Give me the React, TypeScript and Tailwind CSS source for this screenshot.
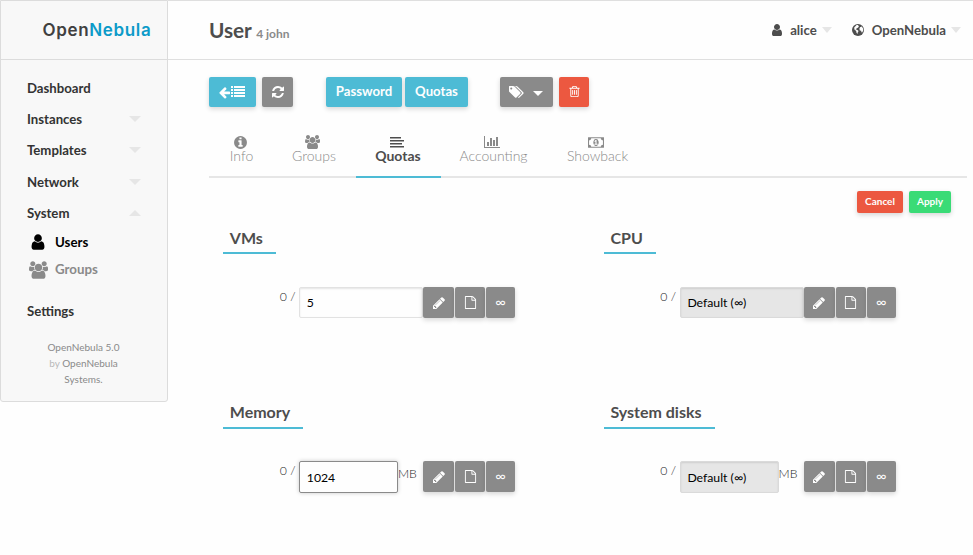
import React from "react";

type IconProps = { d: string; box?: string; className: string };

function Icon({ d, box = "0 0 1792 1792", className }: IconProps) {
  return (
    <svg viewBox={box} className={`block shrink-0 fill-current ${className}`} aria-hidden="true">
      <path d={d} />
    </svg>
  );
}

const USER =
  "M1536 1399q0 109-62.5 187t-150.5 78h-854q-88 0-150.5-78t-62.5-187q0-85 8.5-160.5t31.5-152 58.5-131 94-89 134.5-34.5q131 128 313 128t313-128q76 0 134.5 34.5t94 89 58.5 131 31.5 152 8.5 160.5zm-256-887q0 159-112.5 271.5t-271.5 112.5-271.5-112.5-112.5-271.5 112.5-271.5 271.5-112.5 271.5 112.5 112.5 271.5z";
const USERS =
  "M529 896q-162 5-265 128h-134q-82 0-138-40.5t-56-118.5q0-353 124-353 6 0 43.5 21t97.5 42.5 119 21.5q67 0 133-23-5 37-5 66 0 159 93 256zm1071 637q0 120-73 189.5t-194 69.5h-874q-121 0-194-69.5t-73-189.5q0-53 3.5-103.5t14-109 26.5-108.5 43-97.5 62-81 85.5-53.5 111.5-20q10 0 43 21.5t73 48 107 48 135 21.5 135-21.5 107-48 73-48 43-21.5q61 0 111.5 20t85.5 53.5 62 81 43 97.5 26.5 108.5 14 109 3.5 103.5zm-1024-1277q0 106-75 181t-181 75-181-75-75-181 75-181 181-75 181 75 75 181zm704 384q0 159-112.5 271.5t-271.5 112.5-271.5-112.5-112.5-271.5 112.5-271.5 271.5-112.5 271.5 112.5 112.5 271.5zm576 225q0 78-56 118.5t-138 40.5h-134q-103-123-265-128 93-97 93-256 0-29-5-66 66 23 133 23 59 0 119-21.5t97.5-42.5 43.5-21q124 0 124 353zm-128-609q0 106-75 181t-181 75-181-75-75-181 75-181 181-75 181 75 75 181z";
const USERS_BOX = "-64 0 1920 1792";
const ARROW_LEFT =
  "M1664 896v128q0 53-32.5 90.5t-84.5 37.5h-704l293 294q38 36 38 90t-38 90l-75 76q-37 37-90 37-52 0-91-37l-651-652q-37-37-37-90 0-52 37-91l651-650q38-38 91-38 52 0 90 38l75 74q38 38 38 91t-38 91l-293 293h704q52 0 84.5 37.5t32.5 90.5z";
const LIST =
  "M0 1280h256v256h-256zM384 1280h1408v256h-1408zM0 896h256v256h-256zM384 896h1408v256h-1408zM0 512h256v256h-256zM384 512h1408v256h-1408zM0 128h256v256h-256zM384 128h1408v256h-1408z";
const REFRESH =
  "M1639 1056q0 5-1 7-64 268-268 434.5t-478 166.5q-146 0-282.5-55t-243.5-157l-129 129q-19 19-45 19t-45-19-19-45v-448q0-26 19-45t45-19h448q26 0 45 19t19 45-19 45l-137 137q71 66 161 102t187 36q134 0 250-65t186-179q11-17 53-117 8-23 30-23h192q13 0 22.5 9.5t9.5 22.5zm25-800v448q0 26-19 45t-45 19h-448q-26 0-45-19t-19-45 19-45l138-138q-148-137-349-137-134 0-250 65t-186 179q-11 17-53 117-8 23-30 23h-199q-13 0-22.5-9.5t-9.5-22.5v-7q65-268 270-434.5t480-166.5q146 0 284 55.5t245 156.5l130-129q19-19 45-19t45 19 19 45z";
const TAGS =
  "M384 448q0-53-37.5-90.5t-90.5-37.5-90.5 37.5-37.5 90.5 37.5 90.5 90.5 37.5 90.5-37.5 37.5-90.5zm1067 576q0 53-37 90l-491 492q-39 37-91 37-53 0-90-37l-715-716q-38-37-64.5-101t-26.5-117v-416q0-52 38-90t90-38h416q53 0 117 26.5t102 64.5l715 714q37 39 37 91zm384 0q0 53-37 90l-491 492q-39 37-91 37-36 0-59-14t-53-45l470-470q37-37 37-90 0-52-37-91l-715-714q-38-38-102-64.5t-117-26.5h224q53 0 117 26.5t102 64.5l715 714q37 39 37 91z";
const TRASH =
  "M704 736v576q0 14-9 23t-23 9h-64q-14 0-23-9t-9-23v-576q0-14 9-23t23-9h64q14 0 23 9t9 23zm256 0v576q0 14-9 23t-23 9h-64q-14 0-23-9t-9-23v-576q0-14 9-23t23-9h64q14 0 23 9t9 23zm256 0v576q0 14-9 23t-23 9h-64q-14 0-23-9t-9-23v-576q0-14 9-23t23-9h64q14 0 23 9t9 23zm128 724v-948h-896v948q0 22 7 40.5t14.5 27 10.5 8.5h832q3 0 10.5-8.5t14.5-27 7-40.5zm-672-1076h448l-48-117q-7-9-17-11h-317q-10 2-17 11zm928 32v64q0 14-9 23t-23 9h-96v948q0 83-47 143.5t-113 60.5h-832q-66 0-113-58.5t-47-141.5v-952h-96q-14 0-23-9t-9-23v-64q0-14 9-23t23-9h309l70-167q15-37 54-63t79-26h320q40 0 79 26t54 63l70 167h309q14 0 23 9t9 23z";
const INFO =
  "M1152 1376v-160q0-14-9-23t-23-9h-96v-512q0-14-9-23t-23-9h-320q-14 0-23 9t-9 23v160q0 14 9 23t23 9h96v320h-96q-14 0-23 9t-9 23v160q0 14 9 23t23 9h448q14 0 23-9t9-23zm-128-896v-160q0-14-9-23t-23-9h-192q-14 0-23 9t-9 23v160q0 14 9 23t23 9h192q14 0 23-9t9-23zm640 416q0 209-103 385.5t-279.5 279.5-385.5 103-385.5-103-279.5-279.5-103-385.5 103-385.5 279.5-279.5 385.5-103 385.5 103 279.5 279.5 103 385.5z";
const PENCIL =
  "M491 1536l91-91-235-235-91 91v107h128v128h107zm523-928q0-22-22-22-10 0-17 7l-542 542q-7 7-7 17 0 22 22 22 10 0 17-7l542-542q7-7 7-17zm-54-192l416 416-832 832h-416v-416zm683 96q0 53-37 90l-166 166-416-416 166-165q36-38 90-38 53 0 91 38l235 234q37 39 37 91z";
const FILE =
  "M1596 380q28 28 48 76t20 88v1152q0 40-28 68t-68 28h-1344q-40 0-68-28t-28-68v-1600q0-40 28-68t68-28h896q40 0 88 20t76 48zm-444-244v376h376q-10-29-22-41l-313-313q-12-12-41-22zm384 1528v-1024h-416q-40 0-68-28t-28-68v-416h-768v1536h1280z";
const BARS =
  "M640 896v512h-256v-512h256zm384-512v1024h-256v-1024h256zm1024 1152v128h-2048v-1536h128v1408h1920zm-640-896v768h-256v-768h256zm384-384v1152h-256v-1152h256z";
const MONEY =
  "M768 1152h384v-96h-128v-448h-114l-148 137 77 80q42-37 55-57h2v288h-128v96zm512-256q0 70-21 142t-59.5 134-101.5 101-138 39-138-39-101.5-101-59.5-134-21-142 21-142 59.5-134 101.5-101 138-39 138 39 101.5 101 59.5 134 21 142zm512 256v-512q-106 0-181-75t-75-181h-1152q0 106-75 181t-181 75v512q106 0 181 75t75 181h1152q0-106 75-181t181-75zm128-832v1152q0 26-19 45t-45 19h-1792q-26 0-45-19t-19-45v-1152q0-26 19-45t45-19h1792q26 0 45 19t19 45z";
const ALIGN =
  "M0 128h1408v192h-1408zM0 512h1792v192h-1792zM0 896h1536v192h-1536zM0 1280h1792v192h-1792z";

function Globe() {
  return (
    <svg viewBox="0 0 12 12" className="block h-3 w-3" aria-hidden="true">
      <circle cx="6" cy="6" r="6" fill="#4d4d4d" />
      <path
        d="M4.6 1 L6.6 .9 L6 2.1 L7.2 2.6 L5.8 3.8 L4.6 4.4 L3.6 5.2 L5.4 5.9 L6.6 7 L5.8 8.3 L5.4 10 L4.4 8.6 L4.2 7 L2.4 5.6 L2.2 3.4 Z M8 3.2 L9.8 2.6 L11.2 4.8 L11.2 6.4 L10.2 8.6 L9.4 8.2 L9.2 6.8 L7.8 6.4 L7.4 4.8 Z"
        fill="#fefefe"
      />
    </svg>
  );
}

function Caret({ up = false, className = "w-3" }: { up?: boolean; className?: string }) {
  return (
    <svg viewBox="0 0 12 6" preserveAspectRatio="none" className={`block h-1.5 shrink-0 ${className}`} aria-hidden="true">
      <path d={up ? "M0 6 6 0l6 6z" : "M0 0h12L6 6z"} fill="#e6e6e6" />
    </svg>
  );
}

function NavItem({ label, height, caret }: { label: string; height: string; caret?: "up" | "down" }) {
  return (
    <div className={`flex items-center justify-between pr-[26px] pl-[26px] text-[13.2px] font-bold text-[#333] ${height}`}>
      <span className="pt-[2px]">{label}</span>
      {caret && <Caret up={caret === "up"} />}
    </div>
  );
}

function Sidebar() {
  return (
    <aside className="h-[402px] w-[168px] shrink-0 rounded-b-[3px] border border-[#dcdcdc] bg-[#f8f8f8]">
      <div className="flex h-[59px] items-center border-b border-[#dcdcdc] pl-[41.5px] font-['Inter'] text-[17px] font-semibold tracking-[0.65px]">
        <span className="text-[#404040]">Open</span>
        <span className="text-[#0c9bc9]">Nebula</span>
      </div>
      <nav className="pt-[12px]">
        <NavItem label="Dashboard" height="h-[31px]" />
        <NavItem label="Instances" height="h-[31px]" caret="down" />
        <NavItem label="Templates" height="h-[32px]" caret="down" />
        <NavItem label="Network" height="h-[31px]" caret="down" />
        <NavItem label="System" height="h-[31px]" caret="up" />
        <div className="flex h-[27px] items-center pl-[28px] text-[13.3px] font-bold text-black">
          <Icon d={USER} className="h-[18px] w-[18px]" />
          <span className="ml-[8px] pt-[2px]">Users</span>
        </div>
        <div className="flex h-[27px] items-center pl-[28px] text-[13.3px] font-bold text-[#8a8a8a]">
          <Icon d={USERS} box={USERS_BOX} className="mt-[2px] h-[18px] w-[19px]" />
          <span className="ml-[7px] pt-[2px]">Groups</span>
        </div>
        <div className="h-[13px]" />
        <NavItem label="Settings" height="h-[31px]" />
      </nav>
      <footer className="pt-[13px] pr-px text-center text-[10px] leading-4 text-[#8a8a8a]">
        OpenNebula 5.0
        <br />
        <span className="text-[#b8b8b8]">by</span> OpenNebula
        <br />
        Systems.
      </footer>
    </aside>
  );
}

function Header() {
  return (
    <header className="flex h-[60px] items-center border-t border-b border-[#dfdfdf] pr-[12px] pl-[41px] text-[13.2px] font-bold text-[#4d4d4d]">
      <h1 className="flex-1 text-[20.8px] tracking-[-0.1px]">
        User <span className="text-[12px] tracking-normal text-[#8a8a8a]">4 john</span>
      </h1>
      <Icon d={USER} className="mr-[6px] h-[14px] w-[14px]" />
      <span className="pt-[2px]">alice</span>
      <Caret className="mr-[20px] ml-[5px] w-[10px]" />
      <Globe />
      <span className="ml-[8px] pt-[2px]">OpenNebula</span>
      <Caret className="ml-[5px] w-[10px]" />
    </header>
  );
}

const SHADOW = "shadow-[0_2px_5px_rgba(0,0,0,0.16)]";

function Toolbar() {
  const base = `flex h-[30px] items-center justify-center rounded-[2px] text-[13.2px] font-bold text-[#fefefe] ${SHADOW}`;
  return (
    <div className="mt-[17px] ml-[41px] flex">
      <button className={`${base} w-[47px] bg-[#4dbbd5] pr-[2px]`}>
        <Icon d={ARROW_LEFT} className="h-[13px] w-[13px]" />
        <Icon d={LIST} className="-mt-px h-[14px] w-[14px]" />
      </button>
      <button className={`${base} ml-[6px] w-[31px] bg-[#8a8a8a]`}>
        <Icon d={REFRESH} className="-mt-px h-[14px] w-[14px]" />
      </button>
      <button className={`${base} ml-[33px] w-[76px] bg-[#4dbbd5]`}>Password</button>
      <button className={`${base} ml-[3px] w-[63px] bg-[#4dbbd5]`}>Quotas</button>
      <button className={`${base} ml-[32px] w-[53px] bg-[#8a8a8a]`}>
        <Icon d={TAGS} box="0 0 1856 1792" className="-ml-px h-[14px] w-[15px]" />
        <svg viewBox="0 0 10 5" className="mt-[3px] ml-[9px] block h-[5px] w-[10px]" aria-hidden="true">
          <path d="M0 0h10L5 5z" fill="#fefefe" />
        </svg>
      </button>
      <button className={`${base} ml-[6px] w-[30px] bg-[#ec5840]`}>
        <Icon d={TRASH} className="-mt-px h-[13px] w-[13px]" />
      </button>
    </div>
  );
}

type TabProps = { label: string; width: string; icon: React.ReactNode; active?: boolean };

function Tab({ label, width, icon, active }: TabProps) {
  return (
    <div
      className={`flex h-[43px] flex-col items-center border-b-2 ${width} ${
        active ? "border-[#4dbbd5] font-bold text-[#4d4d4d]" : "border-[#e6e6e6] font-light text-[#8a8a8a]"
      }`}
    >
      <div className="flex h-[14px] items-center pr-[3px]">{icon}</div>
      <span className="leading-[14px]">{label}</span>
    </div>
  );
}

function Tabs() {
  return (
    <div className="mt-[28px] ml-[41px] flex w-[758px]">
      <Tab label="Info" width="w-[63px] pl-[2px]" icon={<Icon d={INFO} className="h-[15px] w-[15px]" />} />
      <Tab label="Groups" width="w-[84px]" icon={<Icon d={USERS} box={USERS_BOX} className="h-[14px] w-[15px]" />} />
      <Tab label="Quotas" width="w-[85px] pr-px" active icon={<Icon d={ALIGN} className="mt-[2px] h-[14px] w-[14px]" />} />
      <Tab label="Accounting" width="w-[106px] pr-px" icon={<Icon d={BARS} box="0 0 2048 1792" className="h-[14px] w-[16px]" />} />
      <Tab label="Showback" width="w-[102px] pr-px" icon={<Icon d={MONEY} box="0 0 1920 1792" className="h-[15px] w-[16px]" />} />
      <div className="flex-1 border-b-2 border-[#e6e6e6]" />
    </div>
  );
}

type QuotaProps = { title: string; value: string; unit?: string; state: "plain" | "focus" | "disabled" };

function Quota({ title, value, unit, state }: QuotaProps) {
  const look = {
    plain: "border-[#e2e2e2] bg-[#fefefe] shadow-[inset_0_1px_2px_rgba(0,0,0,0.1)]",
    focus: "border-[#8a8a8a] bg-[#fefefe] shadow-[0_0_4px_#cacaca]",
    disabled: "border-[#dadada] bg-[#e6e6e6] shadow-[inset_0_1px_2px_rgba(0,0,0,0.1)]",
  }[state];
  const button = `flex h-full items-center justify-center rounded-[2px] bg-[#8a8a8a] text-[#fefefe] ${SHADOW}`;
  return (
    <section className="h-[174px]">
      <h2
        className={`inline-block border-b-2 border-[#4dbbd5] pr-[13.2px] pl-[6.8px] text-[16px] leading-[24px] font-bold text-[#4d4d4d] ${
          unit ? "h-[29px]" : "h-[28px]"
        }`}
      >
        {title}
      </h2>
      <div className={`flex ${unit ? "mt-[32px] h-[32px]" : "mt-[33px] h-[31px]"}`}>
        <span className="w-[76px] pr-[3.5px] text-right text-[12.25px] leading-[19px] font-light text-[#222]">0 /</span>
        <div
          className={`flex items-center rounded-[2px] border pl-[6.8px] text-[12.25px] text-black ${
            unit ? "w-[99px] pt-[2px]" : "w-[124px] pt-px"
          } ${look}`}
        >
          {value}
        </div>
        {unit && <span className="w-[25px] text-[12.25px] leading-[26px] font-light text-[#222]">{unit}</span>}
        <div className="flex h-[31px] gap-px">
          <button className={`${button} w-[31px]`}>
            <Icon d={PENCIL} className="h-[14px] w-[14px]" />
          </button>
          <button className={`${button} w-[30px]`}>
            <Icon d={FILE} className="h-[13px] w-[13px]" />
          </button>
          <button className={`${button} w-[29px] pb-[2px] text-[14px]`}>∞</button>
        </div>
      </div>
    </section>
  );
}

export default function App() {
  return (
    <div className="flex h-[555px] w-[973px] overflow-hidden bg-[#fefefe] font-['Lato',sans-serif] text-[14px] leading-none">
      <Sidebar />
      <main className="min-w-0 flex-1">
        <Header />
        <Toolbar />
        <Tabs />
        <div className="mt-[13px] mr-[22px] flex justify-end gap-[6px] text-[10px] font-bold text-[#fefefe]">
          <button className={`h-[22px] w-[46px] rounded-[2px] bg-[#ec5840] pb-[2px] ${SHADOW}`}>Cancel</button>
          <button className={`h-[22px] w-[42px] rounded-[2px] bg-[#3adb76] pb-[2px] ${SHADOW}`}>Apply</button>
        </div>
        <div className="mt-[13px] ml-[55px] grid grid-cols-[380.6px_1fr]">
          <Quota title="VMs" value="5" state="plain" />
          <Quota title="CPU" value="Default (∞)" state="disabled" />
          <Quota title="Memory" value="1024" unit="MB" state="focus" />
          <Quota title="System disks" value="Default (∞)" unit="MB" state="disabled" />
        </div>
      </main>
    </div>
  );
}
